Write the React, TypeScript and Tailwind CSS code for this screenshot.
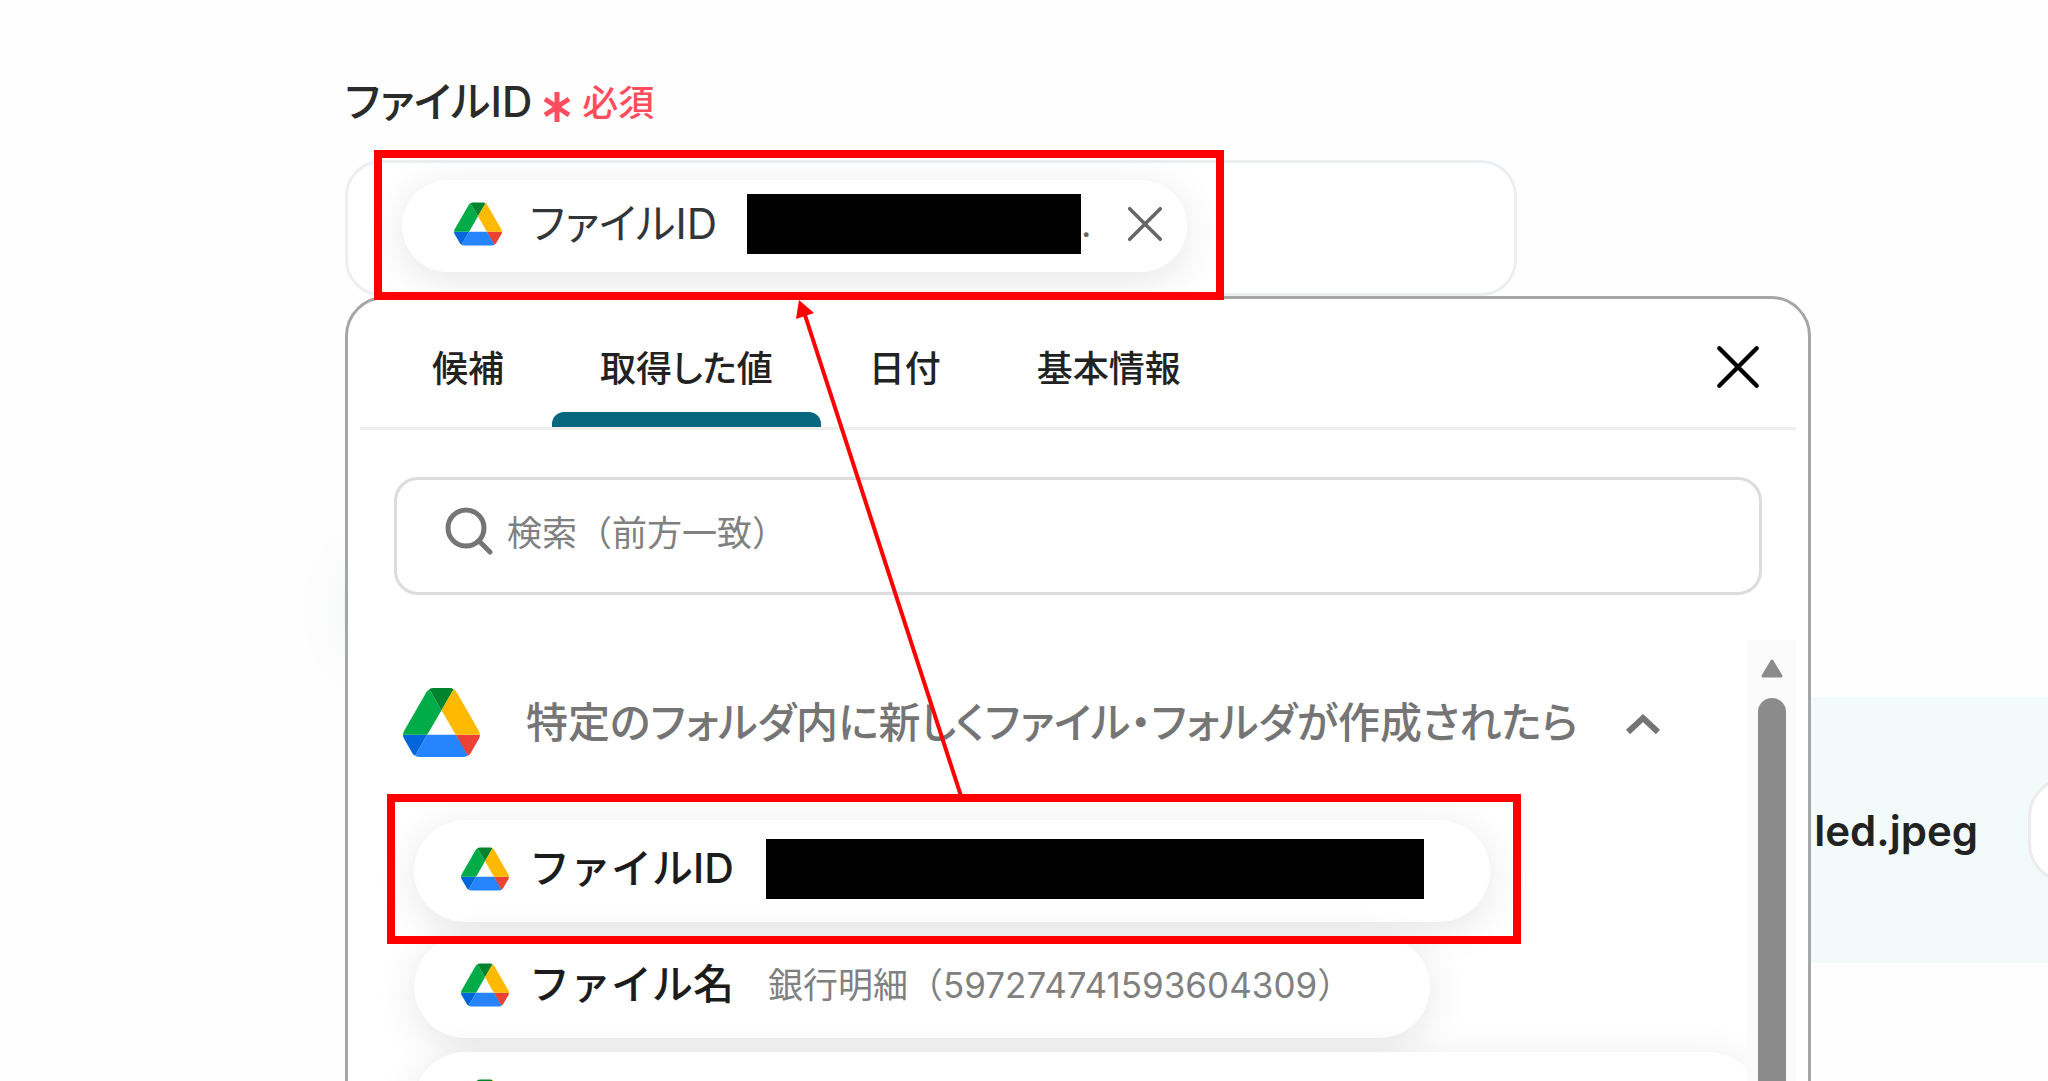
import React from "react";

function DriveIcon({ className }: { className: string }) {
  return (
    <svg viewBox="0 0 87.3 78" className={className} aria-hidden="true">
      <path fill="#0066da" d="m6.6 66.85 3.85 6.65c.8 1.4 1.95 2.5 3.3 3.3l13.75-23.8h-27.5c0 1.55.4 3.1 1.2 4.5z" />
      <path fill="#00ac47" d="m43.65 25-13.75-23.8c-1.35.8-2.5 1.9-3.3 3.3l-25.4 44a9.06 9.06 0 0 0 -1.2 4.5h27.5z" />
      <path fill="#ea4335" d="m73.55 76.8c1.35-.8 2.5-1.9 3.3-3.3l1.6-2.75 7.65-13.25c.8-1.4 1.2-2.95 1.2-4.5h-27.502l5.852 11.5z" />
      <path fill="#00832d" d="m43.65 25 13.75-23.8c-1.35-.8-2.9-1.2-4.5-1.2h-18.5c-1.6 0-3.15.45-4.5 1.2z" />
      <path fill="#2684fc" d="m59.8 53h-32.3l-13.75 23.8c1.35.8 2.9 1.2 4.5 1.2h50.8c1.6 0 3.15-.45 4.5-1.2z" />
      <path fill="#ffba00" d="m73.4 26.5-12.7-22c-.8-1.4-1.95-2.5-3.3-3.3l-13.75 23.8 16.15 28h27.45c0-1.55-.4-3.1-1.2-4.5z" />
    </svg>
  );
}

function CrossIcon({ className, width }: { className: string; width: number }) {
  return (
    <svg viewBox="0 0 40 40" className={className} fill="none" stroke="currentColor" strokeWidth={width} strokeLinecap="round" aria-hidden="true">
      <path d="M3 3 37 37M37 3 3 37" />
    </svg>
  );
}

const tabs = ["候補", "取得した値", "日付", "基本情報"];

function ValueRow({ name, children }: { name?: string; children?: React.ReactNode }) {
  return (
    <button
      type="button"
      aria-label={name ? undefined : "次の値"}
      className="flex h-[102px] shrink-0 items-center rounded-full bg-white pr-[66px] pl-[47px] pb-1 text-left shadow-[0_8px_40px_rgba(0,0,0,0.1)]"
    >
      <DriveIcon className="h-11 w-12" />
      {name && <span className="ml-5 text-[41px] font-medium whitespace-nowrap text-[#1c1c1c]">{name}</span>}
      {children}
    </button>
  );
}

function Field() {
  return (
    <div className="mr-[294px] flex h-[136px] items-center rounded-[36px] border-3 border-[#eceff1] bg-white px-[54px] pb-1">
      <div className="flex h-[92px] shrink-0 items-center rounded-full bg-white pr-6 pb-1 pl-[52px] shadow-[0_8px_40px_rgba(0,0,0,0.1)]">
        <DriveIcon className="h-11 w-12" />
        <span className="ml-7 text-[42px] leading-[60px] whitespace-nowrap text-[#333639] [font-feature-settings:'palt']">ファイルID</span>
        <span className="ml-[30px] h-[60px] w-[334px] bg-black" />
        <span className="text-4xl text-[#666]">.</span>
        <button type="button" aria-label="削除" className="ml-9 text-[#666]">
          <CrossIcon className="size-9" width={4} />
        </button>
      </div>
      <input id="file-id" className="h-20 min-w-0 flex-1 bg-transparent outline-none" />
    </div>
  );
}

function Picker() {
  return (
    <div className="absolute top-full right-0 left-0 z-10 flex h-[900px] flex-col rounded-t-[40px] border-3 border-[#a5a7a7] bg-white px-3 pt-[18px]">
      <div className="flex h-[113px] items-stretch border-b-3 border-[#eee] pl-6">
        {tabs.map((tab, i) => (
          <button key={tab} type="button" className="flex flex-col items-center text-4xl font-medium text-[#222] [font-feature-settings:'palt']">
            <span className="flex flex-1 items-center px-12 pt-2">{tab}</span>
            <span className={i === 1 ? "h-[15px] w-full rounded-t-xl bg-[#06677f]" : "h-[15px] w-full"} />
          </button>
        ))}
        <button type="button" aria-label="閉じる" className="mr-9 mb-[10px] ml-auto text-black">
          <CrossIcon className="size-11" width={4} />
        </button>
      </div>

      <label className="mx-[34px] mt-[47px] flex h-[118px] shrink-0 items-center rounded-3xl border-3 border-[#dcdcdc] pb-1.5 pl-12">
        <svg viewBox="0 0 48 48" className="mb-1 size-12" fill="none" stroke="#757575" strokeWidth="5" strokeLinecap="round" aria-hidden="true">
          <circle cx="21" cy="21" r="18" />
          <path d="M34 34 45 45" />
        </svg>
        <input aria-label="検索" placeholder="検索（前方一致）" className="ml-[14px] h-20 min-w-0 flex-1 text-[35px] outline-none placeholder:text-[#808080]" />
      </label>

      <div className="mt-[45px] flex min-h-0 flex-1">
        <div className="flex min-w-0 flex-1 flex-col items-start overflow-hidden pl-[43px]">
          <button type="button" className="mt-11 flex h-[76px] shrink-0 items-center">
            <DriveIcon className="h-[69px] w-[77px]" />
            <span className="ml-[46px] text-[42px] font-medium whitespace-nowrap text-[#757575] [font-feature-settings:'palt']">
              特定のフォルダ内に新しくファイル・フォルダが作成されたら
            </span>
            <svg viewBox="0 0 34 22" className="mt-1 ml-12 h-[22px] w-[34px]" fill="none" stroke="#757575" strokeWidth="6" aria-hidden="true">
              <path d="M2 19 17 5 32 19" />
            </svg>
          </button>
          <div className="mt-[60px] flex w-full flex-col items-start gap-[14px] pl-[11px]">
            <ValueRow name="ファイルID">
              <span className="ml-8 h-[60px] w-[658px] bg-black" />
            </ValueRow>
            <ValueRow name="ファイル名">
              <span className="ml-[34px] pr-3 text-[35px] whitespace-nowrap text-[#808080]">銀行明細（597274741593604309）</span>
            </ValueRow>
            <ValueRow>
              <span className="w-[1185px]" />
            </ValueRow>
          </div>
        </div>
        <div className="flex w-[49px] flex-col items-center bg-[#fbfbfb] pt-[18px]">
          <svg viewBox="0 0 24 20" className="h-5 w-6" aria-hidden="true">
            <path d="M12 3 21 18H3Z" fill="#8b8b8b" stroke="#8b8b8b" strokeWidth="3" strokeLinejoin="round" />
          </svg>
          <div className="mt-5 w-7 flex-1 rounded-t-full bg-[#8b8b8b]" />
        </div>
      </div>
    </div>
  );
}

function Annotations() {
  return (
    <div className="pointer-events-none absolute inset-0 z-20">
      <div className="absolute top-[150px] left-[374px] h-[150px] w-[850px] border-8 border-[#ff0000]" />
      <div className="absolute top-[794px] left-[387px] h-[150px] w-[1134px] border-8 border-[#ff0000]" />
      <svg viewBox="0 0 180 500" className="absolute top-[298px] left-[790px] h-[500px] w-[180px]" aria-hidden="true">
        <path d="M14 14 171 498" stroke="#f00" strokeWidth="4" />
        <path d="M9 2 6 21 24 15Z" fill="#f00" />
      </svg>
    </div>
  );
}

export default function App() {
  return (
    <main className="relative h-screen overflow-hidden bg-[#fefefe] font-['Inter','Noto_Sans_CJK_JP',sans-serif]">
      <div className="relative z-10 mr-[237px] ml-[345px] pt-[70px]">
        <div className="flex h-[90px] items-start">
          <label htmlFor="file-id" className="text-[42px] leading-[64px] font-medium whitespace-nowrap text-[#2b2b2b] [font-feature-settings:'palt']">
            ファイルID
          </label>
          <span className="ml-3 flex items-center gap-3 text-4xl leading-[66px] font-medium text-[#ff4d5e]">
            <svg viewBox="0 0 26 30" className="mt-2 h-[30px] w-[26px]" stroke="currentColor" strokeWidth="5" aria-hidden="true">
              <path d="M13 0V30M1 7 25 23M25 7 1 23" />
            </svg>
            必須
          </span>
        </div>
        <Field />
        <Picker />
      </div>

      <div className="mt-[279px] ml-[360px] h-[70px] w-[600px] rounded-full shadow-[0_0_70px_rgba(20,80,90,0.16)]" />
      <div className="mt-[52px] ml-[345px] flex h-[266px] items-center justify-end bg-[#f2fafa]">
        <span className="text-[42px] font-semibold text-[#222]">led.jpeg</span>
        <button type="button" aria-label="開く" className="-mr-10 ml-[50px] h-[106px] w-[60px] rounded-l-[40px] border-3 border-[#ececec] bg-white" />
      </div>
      <Annotations />
    </main>
  );
}
